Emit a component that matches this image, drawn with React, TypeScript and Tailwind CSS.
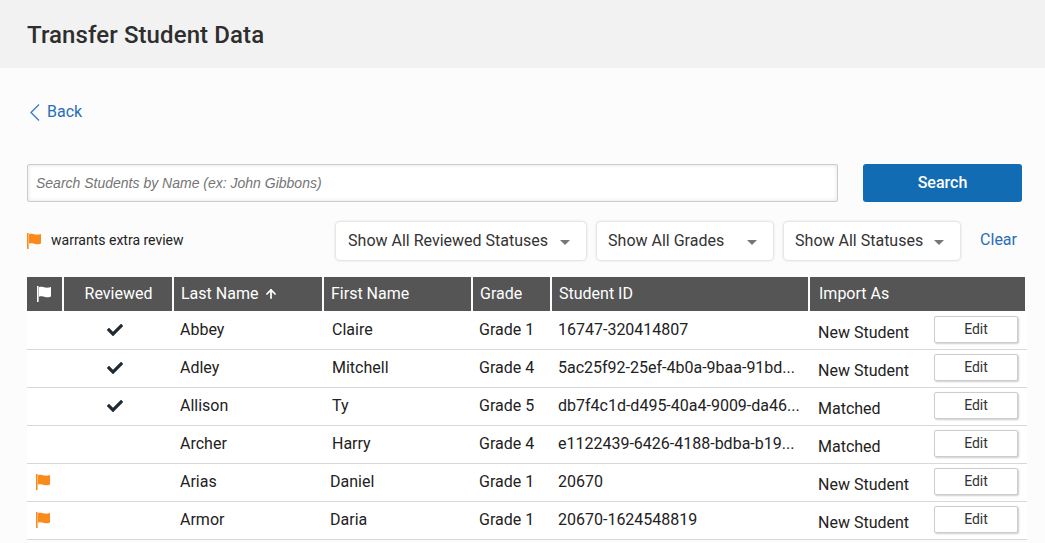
import { ArrowUp } from "lucide-react";
import { FaCheck } from "react-icons/fa";

type Row = {
  last: string;
  first: string;
  grade: string;
  id: string;
  importAs: string;
  reviewed?: boolean;
  flagged?: boolean;
};

const rows: Row[] = [
  { last: "Abbey", first: "Claire", grade: "Grade 1", id: "16747-320414807", importAs: "New Student", reviewed: true },
  { last: "Adley", first: "Mitchell", grade: "Grade 4", id: "5ac25f92-25ef-4b0a-9baa-91bd...", importAs: "New Student", reviewed: true },
  { last: "Allison", first: "Ty", grade: "Grade 5", id: "db7f4c1d-d495-40a4-9009-da46...", importAs: "Matched", reviewed: true },
  { last: "Archer", first: "Harry", grade: "Grade 4", id: "e1122439-6426-4188-bdba-b19...", importAs: "Matched" },
  { last: "Arias", first: "Daniel", grade: "Grade 1", id: "20670", importAs: "New Student", flagged: true },
  { last: "Armor", first: "Daria", grade: "Grade 1", id: "20670-1624548819", importAs: "New Student", flagged: true },
];

const filters = [
  { label: "Show All Reviewed Statuses", width: "w-[250px] pl-[12px]" },
  { label: "Show All Grades", width: "w-[176px] pl-[11px]" },
  { label: "Show All Statuses", width: "w-[176px] pl-[11px]" },
];

const columns = "grid grid-cols-[37px_110px_150px_149px_79px_258px_1fr]";

function Flag({ className }: { className: string }) {
  return (
    <svg viewBox="0 0 16 16" className={className} fill="currentColor" aria-hidden="true">
      <rect x="0" y="0" width="1.6" height="16" />
      <path d="M2 1.2c2.4-1 4 .1 6.2.4 2 .3 3.8.1 5.8-.6v9.4c-2 .9-3.8 1.1-5.8.7-2.200-.4-3.800-1.400-6.200-.4z" />
    </svg>
  );
}

function HeaderCell({ children, className = "" }: { children?: React.ReactNode; className?: string }) {
  return (
    <div className={`flex items-center border-r-2 border-[#fcfcfc] bg-[#555555] pl-[7px] ${className}`}>
      {children}
    </div>
  );
}

export default function App() {
  return (
    <div className="h-[543px] overflow-hidden bg-[#fcfcfc] font-['Roboto',sans-serif] text-[#222222]">
      <header className="flex h-[68px] items-center bg-[#f2f2f2] px-[27px] pt-[2px]">
        <h1 className="text-2xl font-medium tracking-[0.1px] text-[#2e2e2e]">Transfer Student Data</h1>
      </header>

      <main className="pl-[27px] pr-[18px]">
        <a className="mt-[32px] flex h-[24px] items-center gap-[7px] pl-[3px] text-base text-[#2a6db5]">
          <svg viewBox="0 0 10 17" className="h-[17px] w-[10px] text-[#3a7fc4]" fill="none" stroke="currentColor" strokeWidth="1.4" aria-hidden="true">
            <polyline points="9,0.5 1,8.5 9,16.500" />
          </svg>
          Back
        </a>

        <div className="mt-[40px] flex h-[38px] gap-[25px]">
          <input
            readOnly
            placeholder="Search Students by Name (ex: John Gibbons)"
            className="h-full w-[811px] rounded-[2px] border border-[#cccccc] bg-white px-[8px] font-['Liberation_Sans',sans-serif] text-sm italic shadow-[inset_0_0_4px_rgba(0,0,0,0.12)] outline-none placeholder:text-[#757575]"
          />
          <button className="h-full w-[159px] rounded-[3px] bg-[#126cb3] text-base font-medium text-white">
            Search
          </button>
        </div>

        <div className="mt-[20px] flex h-[38px] items-center">
          <Flag className="size-[16px] text-[#fb8a1c]" />
          <span className="ml-[8px] -translate-y-px text-sm text-[#222222]">warrants extra review</span>
          <div className="ml-auto flex items-center gap-[11px]">
            {filters.map((f) => (
              <div
                key={f.label}
                className={`flex h-[38px] items-center justify-between rounded-[4px] bg-white pr-[16px] shadow-[0_0_3px_rgba(0,0,0,0.25)] ${f.width}`}
              >
                <span className="text-base whitespace-nowrap text-[#333333]">{f.label}</span>
                <span className="mt-[2px] h-0 w-0 border-x-[5px] border-t-[5px] border-x-transparent border-t-[#777777]" />
              </div>
            ))}
            <a className="ml-[9px] mr-[10px] -translate-y-px text-base text-[#2a6db5]">Clear</a>
          </div>
        </div>

        <div className="mt-[17px]">
          <div className={`${columns} h-[34px] text-base text-white`}>
            <HeaderCell>
              <Flag className="ml-[3px] size-[16px] text-white" />
            </HeaderCell>
            <HeaderCell className="justify-center pl-0 pr-[6px]">Reviewed</HeaderCell>
            <HeaderCell className="gap-[6px] bg-[#333333]">
              Last Name
              <ArrowUp className="size-[14px]" strokeWidth={3} />
            </HeaderCell>
            <HeaderCell>First Name</HeaderCell>
            <HeaderCell className="pl-[5px]">Grade</HeaderCell>
            <HeaderCell className="pl-[5px]">Student ID</HeaderCell>
            <HeaderCell className="border-r-0 pl-[9px]">Import As</HeaderCell>
          </div>

          <div className="bg-white pt-px">
            {rows.map((r) => (
              <div key={r.last} className={`${columns} h-[38px] items-center border-b border-[#d8d8d8] pb-[2px] text-base`}>
                <div className="pl-[9px]">{r.flagged && <Flag className="size-[16px] text-[#fb8a1c]" />}</div>
                <div className="flex justify-center pr-[8px]">{r.reviewed && <FaCheck className="size-[16px] text-[#1f2a33]" />}</div>
                <div className="pl-[6px]">{r.last}</div>
                <div className={r.flagged ? "pl-[6px]" : "pl-[8px]"}>{r.first}</div>
                <div className="pl-[6px]">{r.grade}</div>
                <div className="truncate pl-[6px]">{r.id}</div>
                <div className="flex items-center justify-between pl-[8px] pr-[9px]">
                  <span className="mt-[7px]">{r.importAs}</span>
                  <button className="h-[27px] w-[84px] rounded-[2px] border border-[#cccccc] bg-white pb-[2px] text-sm text-[#333333] shadow-[1px_1px_2px_rgba(0,0,0,0.2)]">
                    Edit
                  </button>
                </div>
              </div>
            ))}
          </div>
        </div>
      </main>
    </div>
  );
}
